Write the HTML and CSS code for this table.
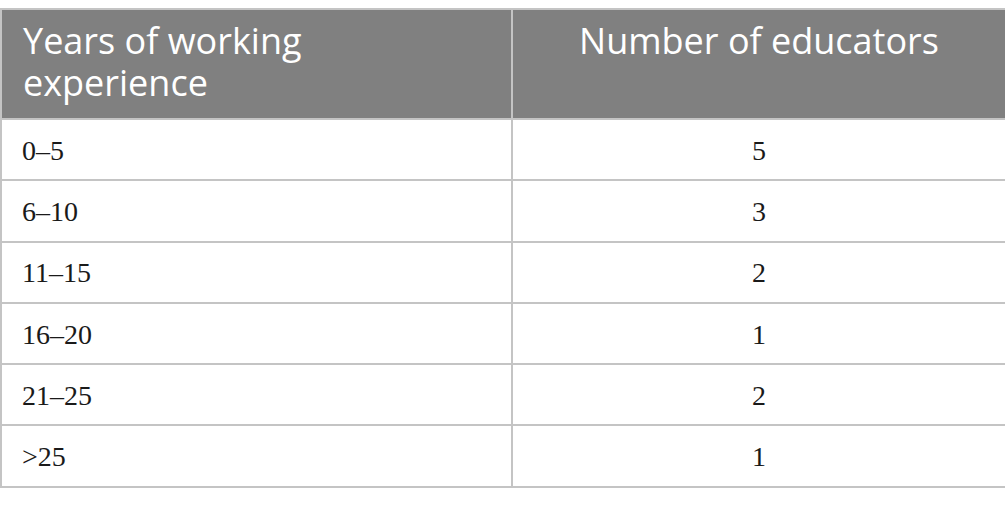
FILE: index.html
```html
<!DOCTYPE html>
<html>
<head>
<meta charset="utf-8">
<link rel="stylesheet" href="styles.css">
</head>
<body>
<table class="data">
  <colgroup><col class="c1"><col class="c2"></colgroup>
  <thead>
    <tr><th class="left head-first">Years of working experience</th><th class="center">Number of educators</th></tr>
  </thead>
  <tbody>
    <tr><td class="left">0–5</td><td class="center">5</td></tr>
    <tr><td class="left">6–10</td><td class="center">3</td></tr>
    <tr><td class="left">11–15</td><td class="center">2</td></tr>
    <tr><td class="left">16–20</td><td class="center">1</td></tr>
    <tr><td class="left">21–25</td><td class="center">2</td></tr>
    <tr><td class="left">&gt;25</td><td class="center">1</td></tr>
  </tbody>
</table>
</body>
</html>
```
FILE: styles.css
```css
html, body { margin: 0; padding: 0; background: #fff; }
body { padding-top: 8px; }
.data {
  border-collapse: collapse;
  width: 1005px;
  table-layout: fixed;
}
.c1 { width: 511px; }
.c2 { width: 494px; }
.data th, .data td {
  border: 2px solid #c4c4c4;
}
.data th {
  background: #808080;
  color: #fff;
  font-family: "Open Sans", sans-serif;
  font-weight: 400;
  font-size: 36px;
  line-height: 42px;
  height: 110px;
  box-sizing: border-box;
  vertical-align: top;
  padding: 10px 22px 0 22px;
}
.data th.head-first {
  padding-left: 21px;
  padding-right: 120px;
}
.data td {
  font-family: "Liberation Serif", serif;
  font-size: 28px;
  color: #1a1a1a;
  height: 57.3px;
  padding: 2px 20px 0 20px;
  vertical-align: middle;
}
.left { text-align: left; }
.center { text-align: center; }
```
